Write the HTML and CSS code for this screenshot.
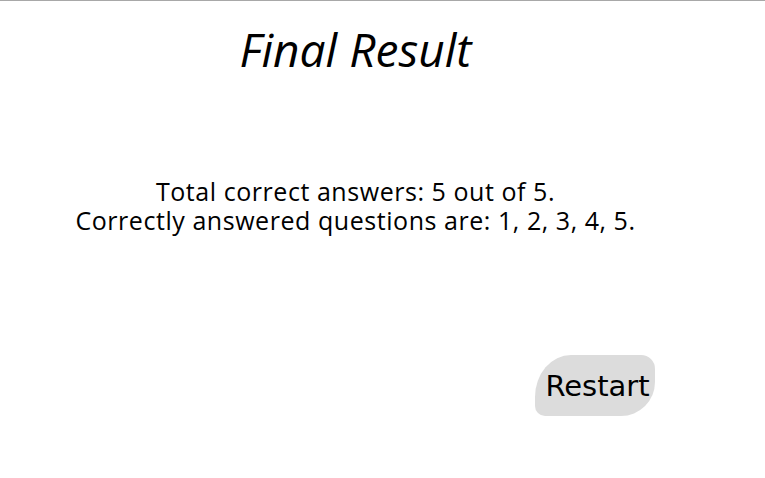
FILE: index.html
```html
<!DOCTYPE html>
<html>
<head>
<meta charset="utf-8">
<link rel="stylesheet" href="styles.css">
</head>
<body>
<main class="page">
  <h1 class="title">Final Result</h1>
  <p class="result">Total correct answers: 5 out of 5.<br>Correctly answered questions are: 1, 2, 3, 4, 5.</p>
  <div class="actions">
    <button class="restart" type="button">Restart</button>
  </div>
</main>
</body>
</html>
```
FILE: styles.css
```css
html, body {
  margin: 0;
  padding: 0;
  background: #fff;
}
body {
  border-top: 1px solid #a8a8a8;
  font-family: "Open Sans", "Noto Sans", sans-serif;
  color: #000;
}
.page {
  width: 695px;
  margin-left: 8px;
  display: flex;
  flex-direction: column;
}
.title {
  margin: 17px 0 0;
  text-align: center;
  font-size: 46px;
  font-weight: 400;
  font-style: italic;
  line-height: 62px;
}
.result {
  margin: 97px 0 0;
  text-align: center;
  font-size: 25px;
  line-height: 29px;
  letter-spacing: 0.55px;
}
.actions {
  display: flex;
  justify-content: flex-end;
  margin-top: 120px;
}
.restart {
  width: 120px;
  height: 61px;
  margin-right: 48px;
  border: none;
  background: #dcdcdc;
  border-radius: 36px 14px 34px 10px / 42px 14px 34px 10px;
  font-family: "DejaVu Sans", sans-serif;
  font-size: 29px;
  color: #000;
  padding: 0 0 0 5px;
}
```
